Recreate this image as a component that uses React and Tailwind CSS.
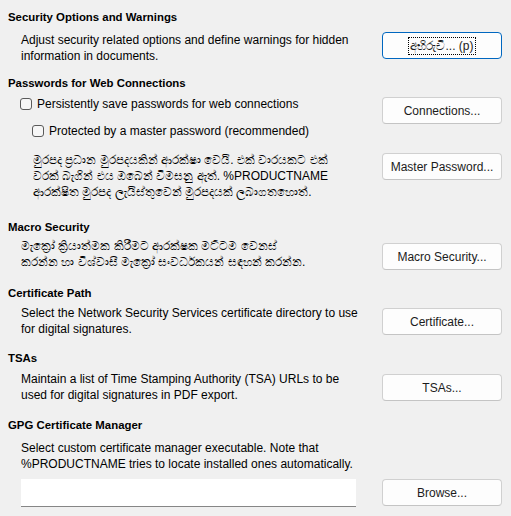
import React from "react";

const font = { fontFamily: '"Liberation Sans", Arial, sans-serif' };

function Btn({ children, className = "", focused = false }) {
  return (
    <div
      className={
        "flex h-[27px] w-[120px] shrink-0 items-center justify-center rounded-[4px] bg-[#fdfdfd] text-[12px] text-[#1b1b1b] " +
        (focused ? "border border-[#0067c0] " : "border border-[#d0d0d0] border-b-[#c4c4c4] ") +
        className
      }
    >
      {focused ? (
        <span className="border border-dotted border-black px-[1px] leading-[16px]">{children}</span>
      ) : (
        <span className="leading-[16px]">{children}</span>
      )}
    </div>
  );
}

function Heading({ children, className = "" }) {
  return (
    <div className={"pl-[8px] text-[11.4px] font-bold leading-[16px] text-black " + className}>{children}</div>
  );
}

function Check({ children, className = "" }) {
  return (
    <div className={"flex h-[16px] items-center text-[12px] leading-[16px] text-black " + className}>
      <span className="mr-[5px] box-border h-[12px] w-[12px] rounded-[3px] border border-[#5a5a5a] bg-[#f6f6f6]" />
      <span>{children}</span>
    </div>
  );
}

export default function App() {
  return (
    <div className="h-[516px] w-[511px] overflow-hidden bg-[#f0f0f0] pr-[9px] pt-[9px] text-black" style={font}>
      <Heading>Security Options and Warnings</Heading>
      <div className="mt-[7px] flex items-start">
        <div className="flex-1 pl-[21px] text-[12px] leading-[16px]">
          Adjust security related options and define warnings for hidden
          <br />
          information in documents.
        </div>
        <Btn focused>අභිරුචි... (p)</Btn>
      </div>

      <Heading className="mt-[11px]">Passwords for Web Connections</Heading>
      <div className="mt-[5px] flex items-start">
        <div className="flex-1 pl-[20px]">
          <Check>Persistently save passwords for web connections</Check>
        </div>
        <Btn className="mt-[1px]">Connections...</Btn>
      </div>
      <div className="mt-[-1px] pl-[32px]">
        <Check>Protected by a master password (recommended)</Check>
      </div>
      <div className="mt-[13px] flex items-start">
        <div className="flex-1 pl-[33px] text-[12px] leading-[16px]">
          මුරපද ප්‍රධාන මුරපදයකින් ආරක්ෂා වෙයි. එක් වාරයකට එක්
          <br />
          වරක් බැගින් එය ඔබෙන් විමසනු ඇත්. %PRODUCTNAME
          <br />
          ආරක්ෂිත මුරපද ලැයිස්තුවෙන් මුරපදයක් ලබාගතහොත්.
        </div>
        <Btn className="mt-[1px]">Master Password...</Btn>
      </div>

      <Heading className="mt-[19px]">Macro Security</Heading>
      <div className="mt-[3px] flex items-start">
        <div className="flex-1 pl-[21px] text-[12px] leading-[16px]">
          මැක්‍රෝ ක්‍රියාත්මක කිරීමට  ආරක්ෂක මට්ටම වෙනස්
          <br />
          කරන්න හා විශ්වාසී මැක්‍රෝ සංවර්ධකයන් සඳහන් කරන්න.
        </div>
        <Btn className="mt-[5px]">Macro Security...</Btn>
      </div>

      <Heading className="mt-[15px]">Certificate Path</Heading>
      <div className="mt-[4px] flex items-start">
        <div className="flex-1 pl-[21px] text-[12px] leading-[16px]">
          Select the Network Security Services certificate directory to use
          <br />
          for digital signatures.
        </div>
        <Btn className="mt-[3px]">Certificate...</Btn>
      </div>

      <Heading className="mt-[13px]">TSAs</Heading>
      <div className="mt-[5px] flex items-start">
        <div className="flex-1 pl-[21px] text-[12px] leading-[16px]">
          Maintain a list of Time Stamping Authority (TSA) URLs to be
          <br />
          used for digital signatures in PDF export.
        </div>
        <Btn className="mt-[3px]">TSAs...</Btn>
      </div>

      <Heading className="mt-[14px]">GPG Certificate Manager</Heading>
      <div className="mt-[7px] pl-[21px] text-[12px] leading-[16px]">
        Select custom certificate manager executable. Note that
        <br />
        %PRODUCTNAME tries to locate installed ones automatically.
      </div>
      <div className="mt-[7px] flex items-start">
        <div className="flex-1 pl-[21px] pr-[26px]">
          <div className="h-[28px] w-full border-b border-[#868686] bg-white" />
        </div>
        <Btn>Browse...</Btn>
      </div>
    </div>
  );
}
